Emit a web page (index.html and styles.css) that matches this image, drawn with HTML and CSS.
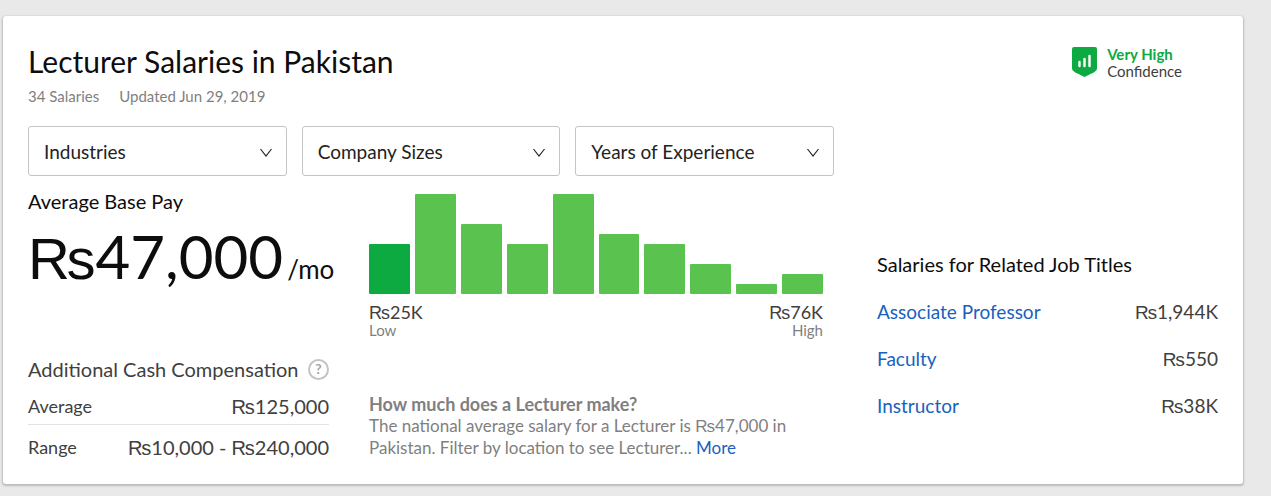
FILE: index.html
```html
<!DOCTYPE html>
<html lang="en">
<head>
    <meta charset="UTF-8">
    <meta name="viewport" content="width=device-width, initial-scale=1.0">
    <title>Lecturer Salaries in Pakistan</title>
    <link rel="stylesheet" href="styles.css">
</head>
<body>

    <main class="card">
        <header class="header">
            <div>
                <h1>Lecturer Salaries in Pakistan</h1>
                <div class="meta">
                    <span>34 Salaries</span>
                    <span>Updated Jun 29, 2019</span>
                </div>
            </div>
            <div class="confidence">
                <svg width="25" height="30" viewBox="0 0 25 30" aria-hidden="true">
                    <path d="M2 0h21a2 2 0 0 1 2 2v19c0 2-1 3-3 4.200L12.500 30 3 25.200C1 24 0 23 0 21V2a2 2 0 0 1 2-2z" fill="#0caa41"/>
                    <path d="M7.500 15v4M12.500 12v7M17.500 9v10" stroke="#fff" stroke-width="2.400" stroke-linecap="round"/>
                </svg>
                <div>
                    <strong>Very High</strong>
                    <span>Confidence</span>
                </div>
            </div>
        </header>

        <div class="content">
            <div class="main">
                <div class="filters">
                    <div class="filter">
                        <select aria-label="Industries"><option>Industries</option></select>
                        <svg class="arrow" width="14" height="10" viewBox="0 0 14 10" aria-hidden="true"><path d="M1.500 1l5.500 7 5.500-7" fill="none" stroke="#222" stroke-width="1.200"/></svg>
                    </div>
                    <div class="filter">
                        <select aria-label="Company Sizes"><option>Company Sizes</option></select>
                        <svg class="arrow" width="14" height="10" viewBox="0 0 14 10" aria-hidden="true"><path d="M1.500 1l5.500 7 5.500-7" fill="none" stroke="#222" stroke-width="1.200"/></svg>
                    </div>
                    <div class="filter">
                        <select aria-label="Years of Experience"><option>Years of Experience</option></select>
                        <svg class="arrow" width="14" height="10" viewBox="0 0 14 10" aria-hidden="true"><path d="M1.500 1l5.500 7 5.500-7" fill="none" stroke="#222" stroke-width="1.200"/></svg>
                    </div>
                </div>

                <div class="stats">
                    <section class="pay">
                        <h2>Average Base Pay</h2>
                        <div class="amount"><span><span class="rs">₨</span>47,000</span><small>/mo</small></div>

                        <div class="extra-title">
                            <h3>Additional Cash Compensation</h3>
                            <button class="help" type="button" aria-label="Help">?</button>
                        </div>
                        <table class="extra">
                            <tr>
                                <th>Average</th>
                                <td><span class="rs">₨</span>125,000</td>
                            </tr>
                            <tr>
                                <th>Range</th>
                                <td><span class="rs">₨</span>10,000 - <span class="rs">₨</span>240,000</td>
                            </tr>
                        </table>
                    </section>

                    <section class="distribution">
                        <div class="chart">
                            <div class="bar first" style="height: 50%"></div>
                            <div class="bar" style="height: 100%"></div>
                            <div class="bar" style="height: 70%"></div>
                            <div class="bar" style="height: 50%"></div>
                            <div class="bar" style="height: 100%"></div>
                            <div class="bar" style="height: 60%"></div>
                            <div class="bar" style="height: 50%"></div>
                            <div class="bar" style="height: 30%"></div>
                            <div class="bar" style="height: 10%"></div>
                            <div class="bar" style="height: 20%"></div>
                        </div>
                        <div class="scale">
                            <div><span class="value"><span class="rs">₨</span>25K</span><span class="note">Low</span></div>
                            <div class="high"><span class="value"><span class="rs">₨</span>76K</span><span class="note">High</span></div>
                        </div>
                        <div class="summary">
                            <h3>How much does a Lecturer make?</h3>
                            <p>The national average salary for a Lecturer is <span class="rs">₨</span>47,000 in Pakistan. Filter by location to see Lecturer... <a href="#">More</a></p>
                        </div>
                    </section>
                </div>
            </div>

            <aside class="related">
                <h2>Salaries for Related Job Titles</h2>
                <table>
                    <tr>
                        <th><a href="#">Associate Professor</a></th>
                        <td><span class="rs">₨</span>1,944K</td>
                    </tr>
                    <tr>
                        <th><a href="#">Faculty</a></th>
                        <td><span class="rs">₨</span>550</td>
                    </tr>
                    <tr>
                        <th><a href="#">Instructor</a></th>
                        <td><span class="rs">₨</span>38K</td>
                    </tr>
                </table>
            </aside>
        </div>
    </main>

</body>
</html>
```
FILE: styles.css
```css
* {
    box-sizing: border-box;
}
body {
    margin: 0;
    padding: 16px 28px 8px 3px;
    background-color: #e9e9e9;
    font-family: Lato, sans-serif;
    font-size: 18px;
    line-height: 22px;
    color: #404040;
}
h1, h2, h3, p {
    margin: 0;
    font-weight: normal;
}
a {
    color: #1861bf;
    text-decoration: none;
}
a:hover {
    text-decoration: underline;
}
table {
    width: 100%;
    border-collapse: collapse;
}
th {
    padding: 0;
    font-weight: normal;
    text-align: left;
}
td {
    padding: 0;
    text-align: right;
    white-space: nowrap;
}
.rs {
    font-family: "Liberation Sans", Arial, sans-serif;
    line-height: 1;
}
.card {
    padding: 24px 25px 14px;
    background-color: #fff;
    border-radius: 3px;
    box-shadow: 0 1px 2px 1px rgba(0, 0, 0, 0.2);
}
.header {
    display: flex;
    justify-content: space-between;
    padding-right: 36px;
}
h1 {
    font-size: 30px;
    line-height: 42px;
    color: #0d0d0d;
}
.meta {
    display: flex;
    gap: 20px;
    margin-top: 3px;
    font-size: 15px;
    color: #7f7f7f;
}
.confidence {
    display: flex;
    gap: 10px;
    padding-top: 6px;
    font-size: 15px;
    line-height: 17px;
}
.confidence svg {
    margin-top: 1px;
}
.confidence strong,
.confidence span {
    display: block;
}
.confidence strong {
    color: #0caa41;
}
.content {
    display: grid;
    grid-template-columns: 1fr 341px;
    gap: 43px;
    margin-top: 19px;
}
.filters {
    display: flex;
    gap: 15px;
}
.filter {
    position: relative;
    flex: 1;
}
.filter select {
    appearance: none;
    width: 100%;
    height: 50px;
    padding: 0 40px 0 15px;
    border: 1px solid #c4c4c4;
    border-radius: 3px;
    background-color: #fff;
    font-family: inherit;
    font-size: 19px;
    color: #222;
}
.arrow {
    position: absolute;
    top: 22px;
    right: 14px;
    pointer-events: none;
}
.stats {
    display: grid;
    grid-template-columns: 301px 1fr;
    gap: 40px;
    padding-right: 11px;
    margin-top: 14px;
}
.pay h2,
.related h2 {
    font-size: 20px;
    color: #0d0d0d;
}
.amount {
    display: flex;
    align-items: baseline;
    gap: 4px;
    margin-top: 12px;
    font-size: 60px;
    line-height: 64px;
    white-space: nowrap;
    color: #0d0d0d;
}
.amount .rs {
    font-size: 58px;
}
.amount small {
    font-size: 26px;
}
.extra-title {
    display: flex;
    align-items: center;
    justify-content: space-between;
    margin-top: 57px;
}
.extra-title h3 {
    font-size: 20px;
}
.help {
    width: 21px;
    height: 21px;
    padding: 0;
    border: 2px solid #c4c4c4;
    border-radius: 50%;
    background-color: #fff;
    font-family: inherit;
    font-size: 14px;
    font-weight: bold;
    line-height: 16px;
    color: #a5a5a5;
}
.extra {
    margin-top: 9px;
}
.extra tr:first-child {
    border-bottom: 1px solid #e3e3e3;
}
.extra th,
.extra td {
    height: 35px;
}
.extra td {
    font-size: 20px;
}
.extra tr:last-child th,
.extra tr:last-child td {
    height: 46px;
}
.distribution {
    padding-top: 4px;
}
.chart {
    display: flex;
    align-items: flex-end;
    gap: 5px;
    height: 100px;
}
.bar {
    flex: 1;
    border-radius: 1px;
    background-color: #5ac24f;
}
.bar.first {
    background-color: #0caa41;
}
.scale {
    display: flex;
    justify-content: space-between;
    margin-top: 7px;
}
.scale .high {
    text-align: right;
}
.scale span.value,
.scale .note {
    display: block;
}
.value {
    font-size: 18px;
}
.note {
    font-size: 15px;
    line-height: 15px;
    color: #7f7f7f;
}
.summary {
    margin-top: 55px;
    color: #7f7f7f;
}
.summary h3 {
    font-size: 18px;
    font-weight: bold;
}
.summary p {
    font-size: 17px;
}
.related {
    padding-top: 127px;
}
.related table {
    margin-top: 13px;
}
.related th,
.related td {
    height: 47px;
    font-size: 19px;
}
```
